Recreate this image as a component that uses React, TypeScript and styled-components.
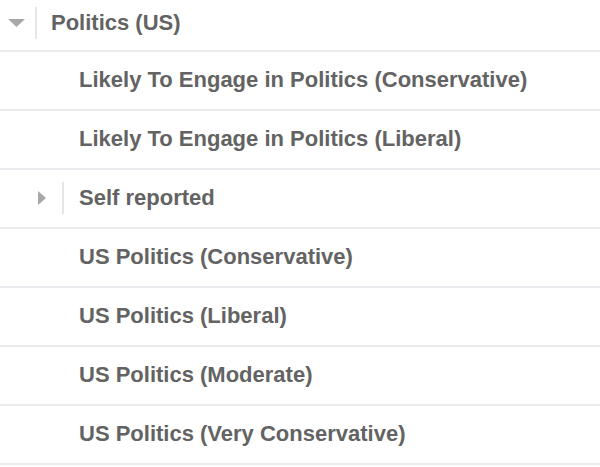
import React from "react";
import styled, { createGlobalStyle } from "styled-components";

const Global = createGlobalStyle`
  html, body { margin: 0; padding: 0; background: #fff; }
  body { font-family: "Liberation Sans", Arial, sans-serif; }
`;

const List = styled.div`
  display: flex;
  flex-direction: column;
  width: 600px;
`;

const Row = styled.div<{ $top?: boolean }>`
  display: flex;
  align-items: center;
  box-sizing: border-box;
  height: ${(p) => (p.$top ? 52 : 59)}px;
  padding-bottom: ${(p) => (p.$top ? 5 : 1)}px;
  border-bottom: 2px solid #ebebef;
`;

const Toggle = styled.div<{ $indent: number; $w: number }>`
  display: flex;
  align-items: center;
  justify-content: center;
  width: ${(p) => p.$w}px;
  margin-left: ${(p) => p.$indent}px;
`;

const Divider = styled.div<{ $gap: number }>`
  width: 2px;
  height: 32px;
  background: #e6e6e6;
  margin: 0 14px 0 ${(p) => p.$gap}px;
`;

const Spacer = styled.div<{ $w: number }>`
  width: ${(p) => p.$w}px;
  flex-shrink: 0;
`;

const Label = styled.span`
  font-size: 22px;
  font-weight: 700;
  color: #636363;
`;

const Down = () => (
  <svg width="17" height="8" viewBox="0 0 17 8">
    <polygon points="0,0 17,0 8.5,8" fill="#a8a8a8" />
  </svg>
);
const Right = () => (
  <svg width="8" height="14" viewBox="0 0 8 14">
    <polygon points="0,0 8,7 0,14" fill="#a8a8a8" />
  </svg>
);

const items = [
  "Likely To Engage in Politics (Conservative)",
  "Likely To Engage in Politics (Liberal)",
  "__self",
  "US Politics (Conservative)",
  "US Politics (Liberal)",
  "US Politics (Moderate)",
  "US Politics (Very Conservative)",
];

export default function App() {
  return (
    <>
      <Global />
      <List>
        <Row $top>
          <Toggle $indent={8} $w={17}>
            <Down />
          </Toggle>
          <Divider $gap={10} />
          <Label>Politics (US)</Label>
        </Row>
        {items.map((t) =>
          t === "__self" ? (
            <Row key={t}>
              <Toggle $indent={38} $w={8}>
                <Right />
              </Toggle>
              <Divider $gap={16} />
              <Label style={{ marginLeft: 1 }}>Self reported</Label>
            </Row>
          ) : (
            <Row key={t}>
              <Spacer $w={79} />
              <Label>{t}</Label>
            </Row>
          )
        )}
      </List>
    </>
  );
}
